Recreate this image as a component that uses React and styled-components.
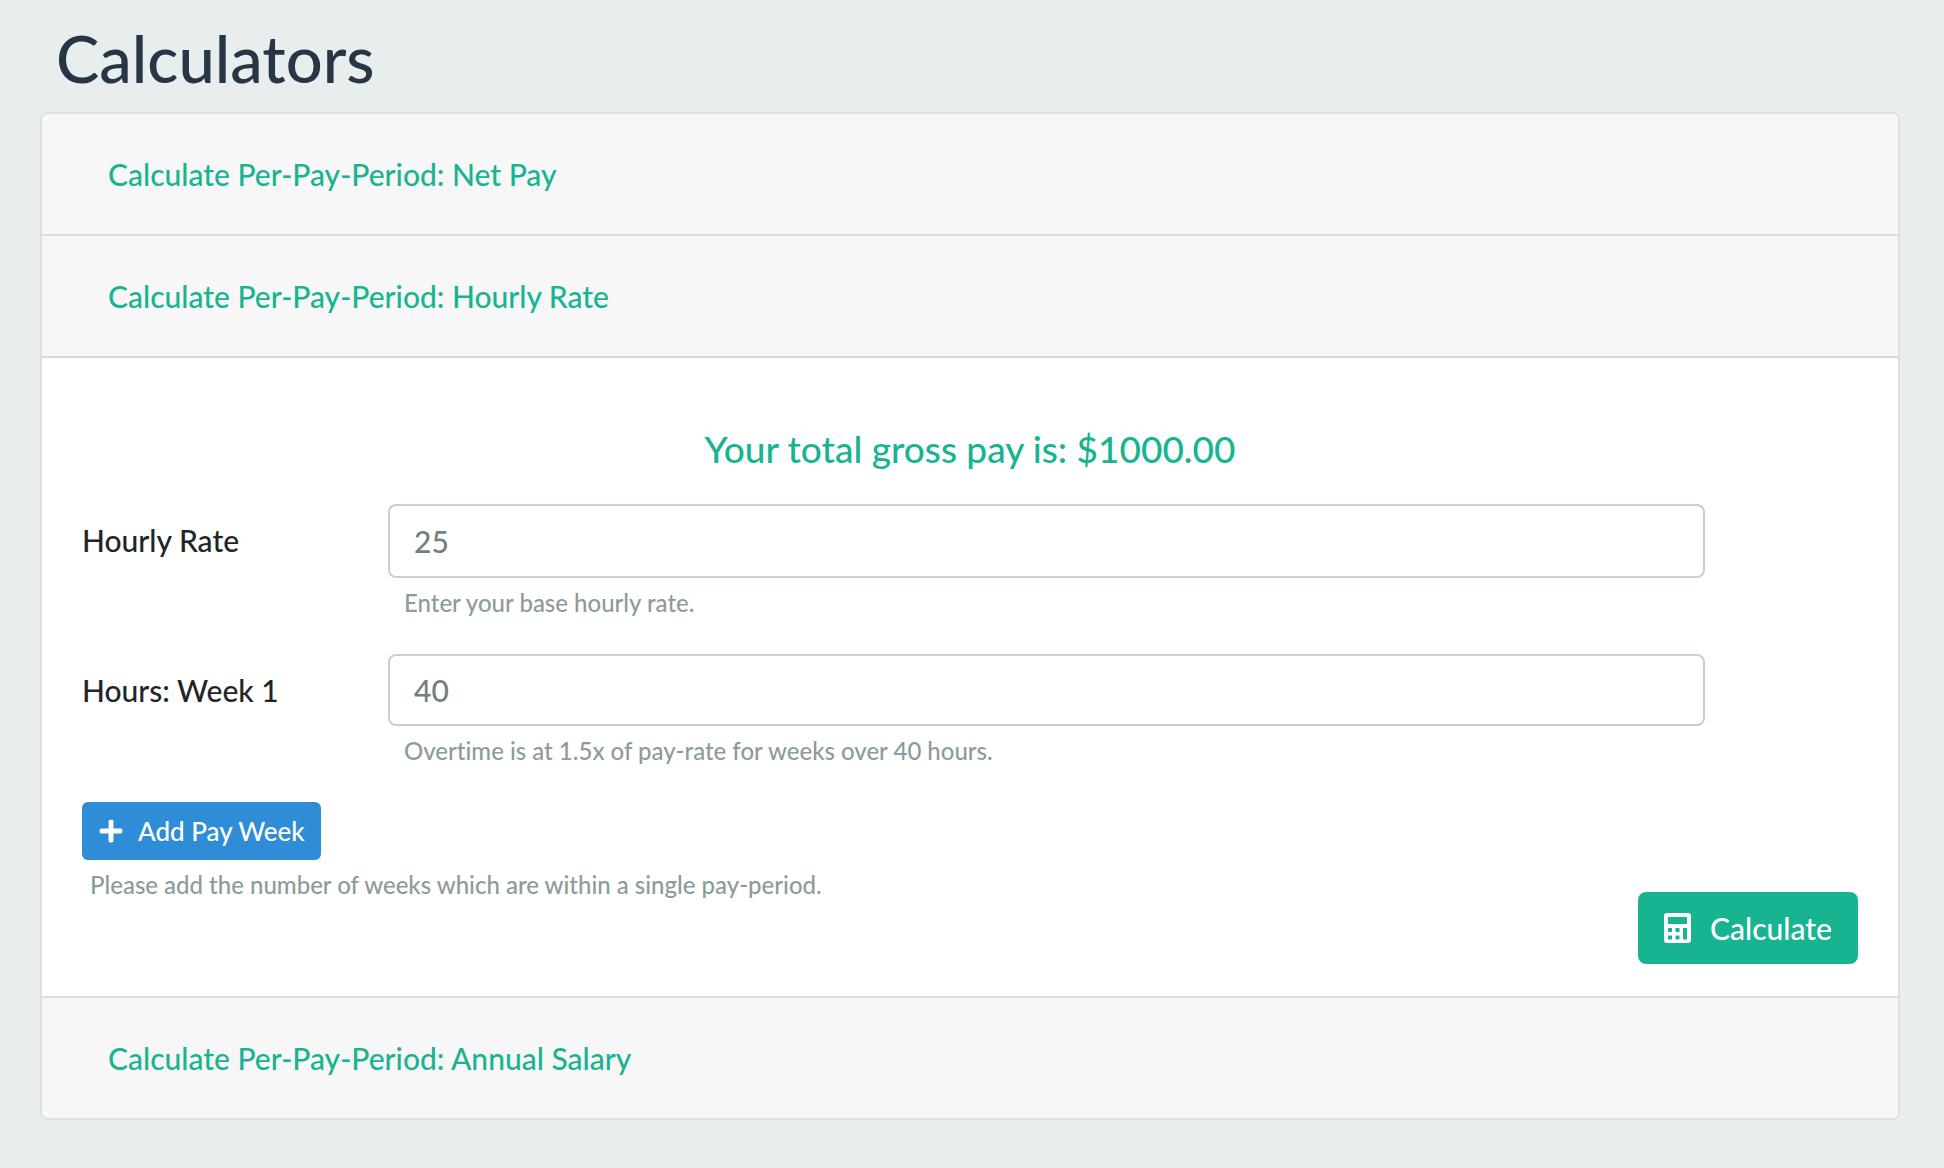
import React, { useState } from "react";
import styled, { createGlobalStyle } from "styled-components";
import { FaPlus } from "react-icons/fa";

const GlobalStyle = createGlobalStyle`
  *, *::before, *::after { box-sizing: border-box; }
  body {
    margin: 0;
    background: #e8eeed;
    color: #212529;
    font-family: Lato, "Open Sans", sans-serif;
    font-size: 30px;
    font-weight: 500;
    font-variant-ligatures: none;
    line-height: 45px;
  }
  button, input { font-family: inherit; font-weight: inherit; }
`;

const Page = styled.main`
  padding: 20px 44px 48px 40px;
`;

const Title = styled.h1`
  margin: 0 0 16px;
  padding-left: 16px;
  color: #273647;
  font-size: 65px;
  font-weight: 500;
  line-height: 76px;
`;

const Accordion = styled.div`
  overflow: hidden;
  border: 2px solid #dedfdf;
  border-radius: 8px;
  background: #fff;
`;

const Section = styled.section`
  & + & { border-top: 2px solid #dedede; }
`;

const SectionHeader = styled.h2`
  margin: 0;
  padding: 24px 40px;
  background: #f7f7f7;
  font-size: 30px;
  font-weight: 500;
`;

const Toggle = styled.button`
  display: block;
  padding: 12px 24px;
  border: 2px solid transparent;
  background: none;
  color: #18b491;
  font-size: 30px;
  line-height: 44px;
  cursor: pointer;
`;

const Panel = styled.form`
  padding: 68px 40px 32px;
  border-top: 2px solid #d8d8d8;
`;

const Result = styled.output`
  display: block;
  margin-bottom: 32px;
  color: #18b491;
  font-size: 37px;
  line-height: 46px;
  text-align: center;
`;

const Field = styled.div`
  display: grid;
  grid-template-columns: repeat(12, minmax(0, 1fr));
  column-gap: 60px;
  margin-bottom: 32px;
`;

const Label = styled.label`
  grid-column: span 2;
  padding-top: 14px;
`;

const Control = styled.div`
  grid-column: span 9;
`;

const Input = styled.input`
  display: block;
  width: 100%;
  height: ${(p) => (p.$tall ? 74 : 72)}px;
  padding: 12px 24px;
  border: 2px solid #c8ced9;
  border-radius: 8px;
  background: #fff;
  color: #73807f;
  font-size: 30px;
`;

const Help = styled.small`
  display: block;
  padding-left: ${(p) => (p.$inset ? 16 : 8)}px;
  margin-top: 8px;
  padding-bottom: 2px;
  color: #8b9c9a;
  font-size: 24px;
  line-height: 34px;
`;

const Button = styled.button`
  display: inline-flex;
  align-items: center;
  border: 0;
  border-radius: 8px;
  color: #fff;
  cursor: pointer;
`;

const AddButton = styled(Button)`
  gap: 14px;
  height: 58px;
  padding: 0 16px;
  border-radius: 6px;
  background: #2f8dd8;
  font-size: 26px;
`;

const CalculateButton = styled(Button)`
  gap: 19px;
  height: 72px;
  padding: 0 26px;
  background: #18b491;
  font-size: 30px;
`;

const Actions = styled.div`
  display: flex;
  justify-content: flex-end;
  margin-top: -12px;
`;

const CalculatorIcon = () => (
  <svg width="27" height="30" viewBox="0 0 27 30" fill="currentColor" aria-hidden="true">
    <path
      fillRule="evenodd"
      d="M3 0H24Q27 0 27 3V27Q27 30 24 30H3Q0 30 0 27V3Q0 0 3 0ZM4 4V11H23V4ZM4 15V19H8V15ZM11.500 15V19H15.500V15ZM19 15V26.500H23V15ZM4 22.500V26.500H8V22.500ZM11.500 22.500V26.500H15.500V22.500Z"
    />
  </svg>
);

const fields = [
  { id: "rate", label: "Hourly Rate", help: "Enter your base hourly rate.", tall: true },
  { id: "week-1", label: "Hours: Week 1", help: "Overtime is at 1.5x of pay-rate for weeks over 40 hours." },
];

function HourlyForm() {
  const [values, setValues] = useState({ rate: "25", "week-1": "40" });
  return (
    <Panel onSubmit={(e) => e.preventDefault()}>
      <Result>Your total gross pay is: $1000.00</Result>
      {fields.map((f) => (
        <Field key={f.id}>
          <Label htmlFor={f.id}>{f.label}</Label>
          <Control>
            <Input
              id={f.id}
              $tall={f.tall}
              inputMode="decimal"
              aria-describedby={`${f.id}-help`}
              value={values[f.id]}
              onChange={(e) => setValues({ ...values, [f.id]: e.target.value })}
            />
            <Help id={`${f.id}-help`} $inset>{f.help}</Help>
          </Control>
        </Field>
      ))}
      <AddButton type="button">
        <FaPlus size={26} aria-hidden="true" />
        Add Pay Week
      </AddButton>
      <Help>Please add the number of weeks which are within a single pay-period.</Help>
      <Actions>
        <CalculateButton type="submit">
          <CalculatorIcon />
          Calculate
        </CalculateButton>
      </Actions>
    </Panel>
  );
}

export default function App() {
  const [open, setOpen] = useState("Hourly Rate");
  return (
    <>
      <GlobalStyle />
      <Page>
        <Title>Calculators</Title>
        <Accordion>
          {["Net Pay", "Hourly Rate", "Annual Salary"].map((name) => (
            <Section key={name}>
              <SectionHeader>
                <Toggle
                  type="button"
                  aria-expanded={open === name}
                  onClick={() => setOpen(open === name ? "" : name)}
                >
                  Calculate Per-Pay-Period: {name}
                </Toggle>
              </SectionHeader>
              {open === name && name === "Hourly Rate" && <HourlyForm />}
            </Section>
          ))}
        </Accordion>
      </Page>
    </>
  );
}
